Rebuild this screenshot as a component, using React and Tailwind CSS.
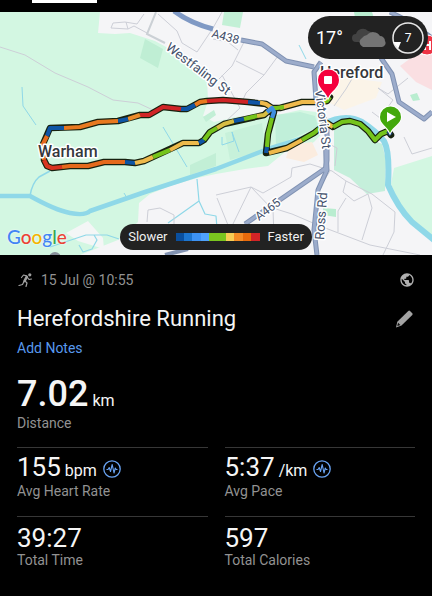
import React from "react";
import { MdPublic } from "react-icons/md";

const route = [
  { color: "#75c41c", points: "330,97 327,101 321,102" },
  { color: "#eeb94b", points: "321,102 302,102 280,108" },
  { color: "#75c41c", points: "284,107 277,108 272,108" },
  { color: "#eeb94b", points: "272,108 266,104 258,102" },
  { color: "#0f55a5", points: "260,103 248,102" },
  { color: "#cf2426", points: "248,102 223,100 207,101" },
  { color: "#e87920", points: "207,101 200,102 195,105" },
  { color: "#0f55a5", points: "195,105 187,109 181,109" },
  { color: "#cf2426", points: "181,109 163,107 149,115 140,115" },
  { color: "#eb8b2a", points: "140,115 128,119" },
  { color: "#0f55a5", points: "128,119 118,121" },
  { color: "#e87920", points: "118,121 98,122 80,127 64,128" },
  { color: "#0f55a5", points: "64,128 50,128 47,136" },
  { color: "#e5691c", points: "47,136 43,144 44,160" },
  { color: "#d93420", points: "44,160 47,166 52,168 62,167" },
  { color: "#e5691c", points: "62,167 70,166 88,166 104,162 125,162" },
  { color: "#0f55a5", points: "125,162 135,163" },
  { color: "#eeb94b", points: "135,163 144,161 153,157" },
  { color: "#75c41c", points: "153,157 170,150" },
  { color: "#eeb94b", points: "170,150 183,143 199,143" },
  { color: "#0f55a5", points: "199,143 204,140" },
  { color: "#75c41c", points: "204,140 210,132 217,128" },
  { color: "#d7bd43", points: "217,128 224,124 234,121" },
  { color: "#0f55a5", points: "234,121 244,119" },
  { color: "#75c41c", points: "244,119 257,116" },
  { color: "#d7bd43", points: "257,116 264,115 270,110" },
  { color: "#3f8fe0", points: "267,112 272,108 274,112 272,118" },
  { color: "#75c41c", points: "272,118 268,134 267,147" },
  { color: "#0f55a5", points: "267,147 266,153" },
  { color: "#eeb94b", points: "269,153 287,148 302,140" },
  { color: "#75c41c", points: "302,140 314,133 320,128" },
  { color: "#eeb94b", points: "320,128 327,123 333,127" },
  { color: "#75c41c", points: "333,127 342,122 350,121 360,124 368,131 375,140 381,134 388,131" },
  { color: "#153e70", points: "388,131 391,135" },
];

const outline =
  "330,97 327,101 321,102 302,102 280,108 272,108 266,104 248,102 223,100 207,101 200,102 187,109 181,109 163,107 149,115 140,115 118,121 98,122 80,127 50,128 43,144 44,160 47,166 52,168 70,166 88,166 104,162 125,162 135,163 144,161 183,143 199,143 204,140 210,132 224,124 264,115 272,108 274,112 268,134 266,153 287,148 314,133 327,123 333,127 342,122 350,121 360,124 368,131 375,140 381,134 388,131 391,135";

const minorRoads = [
  "0,47 25,55 55,73 88,87 113,100 138,103 153,110",
  "111,28 113,23 125,22 137,24 144,14",
  "111,28 128,29 134,26 147,33",
  "126,22 128,29",
  "158,14 177,31 182,43 197,52 213,28 222,12",
  "213,39 228,42 238,50",
  "216,82 232,66 244,42",
  "236,61 264,75 278,56",
  "264,75 246,93 241,104",
  "222,75 240,108 225,122",
  "378,88 393,100 380,118 372,112",
  "378,88 388,94 408,78",
  "404,137 412,154 432,148",
  "216,195 251,187 232,226",
  "251,187 273,210 274,236",
  "217,198 230,230",
  "251,187 263,193 279,184 291,177 292,168 310,164 332,171 346,181 372,194 395,212 394,232 383,255",
  "346,181 343,192 354,201 368,194 372,208 362,240",
  "346,198 338,211 338,232",
  "276,209 292,214 320,226 370,245 420,255",
  "147,222 148,210 160,208 174,215 174,224",
  "333,80 356,72 346,89 334,106",
  "330,171 318,190 315,210",
  "327,126 331,145 337,148 335,166",
];

const mainRoads = [
  "241,40 262,44 286,61 314,67",
  "381,58 392,74 399,102 424,119 432,112",
  "321,62 314,72 316,100 327,125 327,160 325,172",
  "326,150 326,168 245,224",
  "326,150 327,170 318,190 314,230 317,255",
  "390,12 410,22 432,38",
];

function Label({ x, y, size, rotate = 0, weight = 400, color = "#44516b", children }) {
  return (
    <text
      x={x}
      y={y}
      fontSize={size}
      fontWeight={weight}
      fill={color}
      stroke="#ffffff"
      strokeWidth="3"
      strokeLinejoin="round"
      paintOrder="stroke"
      transform={`rotate(${rotate} ${x} ${y})`}
    >
      {children}
    </text>
  );
}

function RouteMap() {
  return (
    <svg
      className="block h-full w-full"
      viewBox="0 12 432 243"
      preserveAspectRatio="xMidYMid slice"
      fontFamily="Roboto, sans-serif"
      role="img"
      aria-label="Route map"
    >
      <rect y="12" width="432" height="243" fill="#f5f5f7" />
      <path
        d="M0 12H100L98 33 115 34 130 33 155 41 166 47 180 60 197 70 207 80 208 100 225 112 255 120 268 117 300 110 316 112 330 125 314 142 300 150 285 152 268 166 245 169 216 174 197 178 170 186 150 194 139 203 138 222 118 240 80 255H0Z"
        fill="#d3f7e2"
      />
      <path d="M208 101 240 104 262 107 255 114 236 117 214 122 203 116Z" fill="#f1f7f5" />
      <path d="M66 233 88 221 103 238 104 249 78 241Z" fill="#f4f6f6" />
      <path d="M145 39 163 49 158 68 140 58Z" fill="#bfeed4" />
      <path d="M203 117 214 110 216 115 206 122ZM190 165 216 153 216 166 190 175Z" fill="#c2efd6" />
      <path d="M275 115 300 112 315 116 318 127 298 136 276 145Z" fill="#c0efd9" />
      <path d="M225 133 262 123 265 150 230 160Z" fill="#c7f1da" />
      <path d="M224 12H243L240 28 222 25Z" fill="#c3f0d6" />
      <path d="M354 12H372L374 18 355 18ZM410 95 417 93 420 100 413 101ZM323 208 336 209 336 217 323 215Z" fill="#b9edd0" />
      <path d="M334 125 355 123 371 139 382 144 386 160 385 191 367 194 350 178 334 170Z" fill="#c5efdb" />
      <path d="M394 168 432 156V239L412 222 399 204 391 184Z" fill="#d3f7e2" />
      <path d="M290 145 312 142 318 155 304 162 286 158Z" fill="#fbecdf" />
      <path d="M331 76 382 82 376 98 344 110 330 103Z" fill="#fbf4e8" />
      <path d="M415 55H432V90L416 82 400 66Z" fill="#fadfe2" />

      <g fill="none" stroke="#8fd8e8" strokeLinejoin="round">
        <path d="M0 196H30Q55 210 70 213T90 211L145 192 216 169 268 149 310 136" strokeWidth="4.5" />
        <path d="M324 124Q345 113 362 122 376 131 384 141 390 152 388 185 398 208 412 222L434 240" strokeWidth="6" />
        <path d="M30 196Q32 183 39 177L50 171" strokeWidth="1.5" />
        <path d="M22 87 23 106 36 125" strokeWidth="1" />
        <path d="M163 127 187 167M124 193 127 198M222 137V145L234 141 232 132 239 152M299 45 306 59" strokeWidth="1" />
        <path d="M197 179 199 201 168 223M199 201 205 214 216 216 217 228M50 247 86 235H107L119 239M79 245 83 252 92 249 97 240 94 235" strokeWidth="1.2" />
      </g>

      <g fill="none" stroke="#cdcfd7" strokeWidth="1" strokeLinejoin="round">
        {minorRoads.map((points) => (
          <polyline key={points} points={points} />
        ))}
      </g>
      <path d="M156 12 147 34 165 43" fill="none" stroke="#cbd0d5" strokeWidth="2" />

      <g fill="none" strokeLinejoin="round">
        {mainRoads.map((points) => (
          <polyline key={points} points={points} stroke="#7f91b2" strokeWidth="5" />
        ))}
        {mainRoads.map((points) => (
          <polyline key={points} points={points} stroke="#9caccb" strokeWidth="3" />
        ))}
        <path d="M174 11Q190 23 213 29" stroke="#7f99c4" strokeWidth="5" />
        <path d="M165 255 188 249" stroke="#8293b2" strokeWidth="4" />
      </g>

      <g fill="none" strokeLinejoin="round">
        <polyline points={outline} stroke="#17210f" strokeWidth="6.5" strokeLinecap="round" />
        {route.map((part) => (
          <polyline key={part.points} points={part.points} stroke={part.color} strokeWidth="4.2" />
        ))}
      </g>

      <Label x={211} y={37} size={12} rotate={15}>A438</Label>
      <Label x={165} y={49} size={13} rotate={37}>Westfaling St</Label>
      <Label x={315} y={90} size={13} rotate={83}>Victoria St</Label>
      <Label x={259} y={221} size={12} rotate={-37}>A465</Label>
      <Label x={324} y={240} size={13} rotate={-86}>Ross Rd</Label>
      <Label x={38} y={157} size={16} weight={500} color="#35373c">Warham</Label>
      <Label x={320} y={78} size={16} weight={500} color="#35373c">Hereford</Label>

      <circle cx="427" cy="45" r="10" fill="#ee3445" stroke="#ffffff" strokeWidth="1" />
      <path d="M425 41V50M430 41V50M425 45H430" stroke="#ffffff" strokeWidth="2" />

      <g stroke="#ffffff" strokeWidth="2" paintOrder="stroke">
        <path d="M328 98C325 91 318 88 318 80A10.500 10.500 0 0 1 339 80C339 88 331 91 328 98Z" fill="#f5003c" />
        <path d="M390 133C387 126 380 124 380 117A10.500 10.500 0 0 1 401 117C401 124 393 126 390 133Z" fill="#43a80c" />
      </g>
      <rect x="324" y="76" width="8" height="8" rx="1" fill="#ffffff" />
      <path d="M387 112V122L396 117Z" fill="#ffffff" />
      <circle cx="55" cy="258" r="6" fill="#88909a" />
    </svg>
  );
}

function GoogleMark() {
  return (
    <p className="font-[Lato,sans-serif] text-[19px] leading-5 font-medium [text-shadow:0_0_2px_white]">
      <span className="text-[#4285f4]">G</span>
      <span className="text-[#ea4335]">o</span>
      <span className="text-[#f4b400]">o</span>
      <span className="text-[#4285f4]">g</span>
      <span className="text-[#34a853]">l</span>
      <span className="text-[#ea4335]">e</span>
    </p>
  );
}

function Weather() {
  return (
    <div className="flex h-[43px] items-center rounded-full bg-[#222222] pr-1 pl-2 text-white">
      <span className="w-9 text-[18px] leading-6">17°</span>
      <svg className="h-5 w-9" viewBox="0 0 36 20" aria-label="Cloudy">
        <path d="M4 14A4 4 0 0 1 4 6 7 7 0 0 1 16 3 6 6 0 0 1 21 8L10 14Z" fill="#434343" />
        <path d="M11 19A5 5 0 0 1 10 10 7 7 0 0 1 15 7 8 8 0 0 1 28 8 5 5 0 0 1 33 13 4 4 0 0 1 30 19Z" fill="#747474" />
      </svg>
      <svg className="ml-1 h-8 w-8" viewBox="0 0 32 32" fontFamily="Roboto, sans-serif" aria-label="Wind 7">
        <circle cx="16" cy="16" r="15" fill="none" stroke="#e8e8e8" strokeWidth="1.500" />
        <path d="M1 20H9L6 27Z" fill="#ffffff" />
        <text x="16" y="20" fontSize="12" textAnchor="middle" fill="#ffffff">7</text>
      </svg>
    </div>
  );
}

const scale = [
  "bg-[#0a4f9e]",
  "bg-[#1d75ce]",
  "bg-[#3d92f3]",
  "bg-[#50a2fb]",
  "bg-[#7ac51f]",
  "bg-[#7ac51f]",
  "bg-[#f8cc54]",
  "bg-[#f58b26]",
  "bg-[#e96a0c]",
  "bg-[#d32427]",
];

function Legend() {
  return (
    <div className="flex h-[26px] items-center gap-2 rounded-full bg-[#222222] px-2 text-[13px] text-[#f0f0f0]">
      <span>Slower</span>
      <div className="flex h-2 w-21">
        {scale.map((color, i) => (
          <span key={i} className={`flex-1 ${color}`} />
        ))}
      </div>
      <span>Faster</span>
    </div>
  );
}

function Runner() {
  return (
    <svg className="h-4 w-4" viewBox="0 0 16 16" fill="none" stroke="#a0a0a0" strokeLinecap="round" strokeLinejoin="round" aria-hidden="true">
      <circle cx="12.800" cy="2.800" r="1.600" fill="#a0a0a0" stroke="none" />
      <path d="M9.800 4.800 7.500 9" strokeWidth="2.600" />
      <path d="M9.500 3.800 6.500 3 4.500 5.500M10.500 5.500 12 7.500 14.500 7M8 9 10 11 9 14.500M7 9.500 5.500 12.500 2 13.500" strokeWidth="1.200" />
    </svg>
  );
}

function Pencil() {
  return (
    <svg className="h-[18px] w-5" viewBox="0 0 20 18" aria-hidden="true">
      <path d="M13.300.9Q14.200.2 15 .9L17.300 3.200Q18 4 17.300 4.900L6.500 15.500 1 17.500 2.300 11.800Z" fill="#a3a3a3" />
      <path d="M3.100 12.800 5.400 15 2.700 16 2.300 15.600Z" fill="#111111" />
    </svg>
  );
}

function Pulse() {
  return (
    <svg className="h-[18px] w-[18px]" viewBox="0 0 18 18" fill="none" stroke="#69a3f2" strokeLinejoin="round" aria-hidden="true">
      <circle cx="9" cy="9" r="8.200" strokeWidth="1.300" />
      <path d="M3.500 9.500H5L6.200 7.500 7.500 11.500 9.200 4.500 11 13 12.300 8 13.200 9.500H14.500" strokeWidth="1.100" />
    </svg>
  );
}

function Stat({ value, unit, label, info }) {
  return (
    <div className="border-t border-[#373737] pt-2 pb-4">
      <dd className="flex h-[26px] items-center">
        <span className="flex items-baseline gap-1">
          <span className="text-[26px] leading-[26px]">{value}</span>
          {unit && <span className="text-base leading-[26px]">{unit}</span>}
        </span>
        {info && (
          <button type="button" className="ml-1.5" aria-label={`About ${label}`}>
            <Pulse />
          </button>
        )}
      </dd>
      <dt className="text-sm leading-[18px] text-[#929292]">{label}</dt>
    </div>
  );
}

export default function App() {
  return (
    <div className="min-h-screen bg-black font-[Roboto,sans-serif] text-[#f5f5f5]">
      <header className="h-3 px-8">
        <div className="h-[3px] w-[65px] bg-white" />
      </header>

      <section className="relative h-[243px] overflow-hidden">
        <RouteMap />
        <div className="absolute top-1 right-1">
          <Weather />
        </div>
        <div className="absolute bottom-2 left-[7px]">
          <GoogleMark />
        </div>
        <div className="absolute inset-x-0 bottom-[5px] flex justify-center">
          <Legend />
        </div>
      </section>

      <main className="px-[17px] pt-[15px]">
        <div className="flex h-5 items-center text-sm text-[#929292]">
          <Runner />
          <span className="ml-2">15 Jul @ 10:55</span>
          <MdPublic className="ml-auto h-4 w-4 text-[#b0b0b0]" />
        </div>

        <div className="mt-[15px] flex h-7 items-center justify-between">
          <h1 className="text-[22px] leading-7">Herefordshire Running</h1>
          <button type="button" aria-label="Edit title">
            <Pencil />
          </button>
        </div>

        <a href="#notes" className="mt-1.5 block w-fit text-sm leading-[18px] text-[#5899ee]">
          Add Notes
        </a>

        <dl className="mt-[17px]">
          <dd className="flex items-baseline gap-1">
            <span className="text-4xl leading-10 font-medium">7.02</span>
            <span className="text-base">km</span>
          </dd>
          <dt className="text-sm leading-[18px] text-[#929292]">Distance</dt>
        </dl>

        <dl className="mt-[15px] grid grid-cols-2 gap-x-[17px]">
          <Stat value="155" unit="bpm" label="Avg Heart Rate" info />
          <Stat value="5:37" unit="/km" label="Avg Pace" info />
          <Stat value="39:27" label="Total Time" />
          <Stat value="597" label="Total Calories" />
        </dl>
      </main>
    </div>
  );
}
